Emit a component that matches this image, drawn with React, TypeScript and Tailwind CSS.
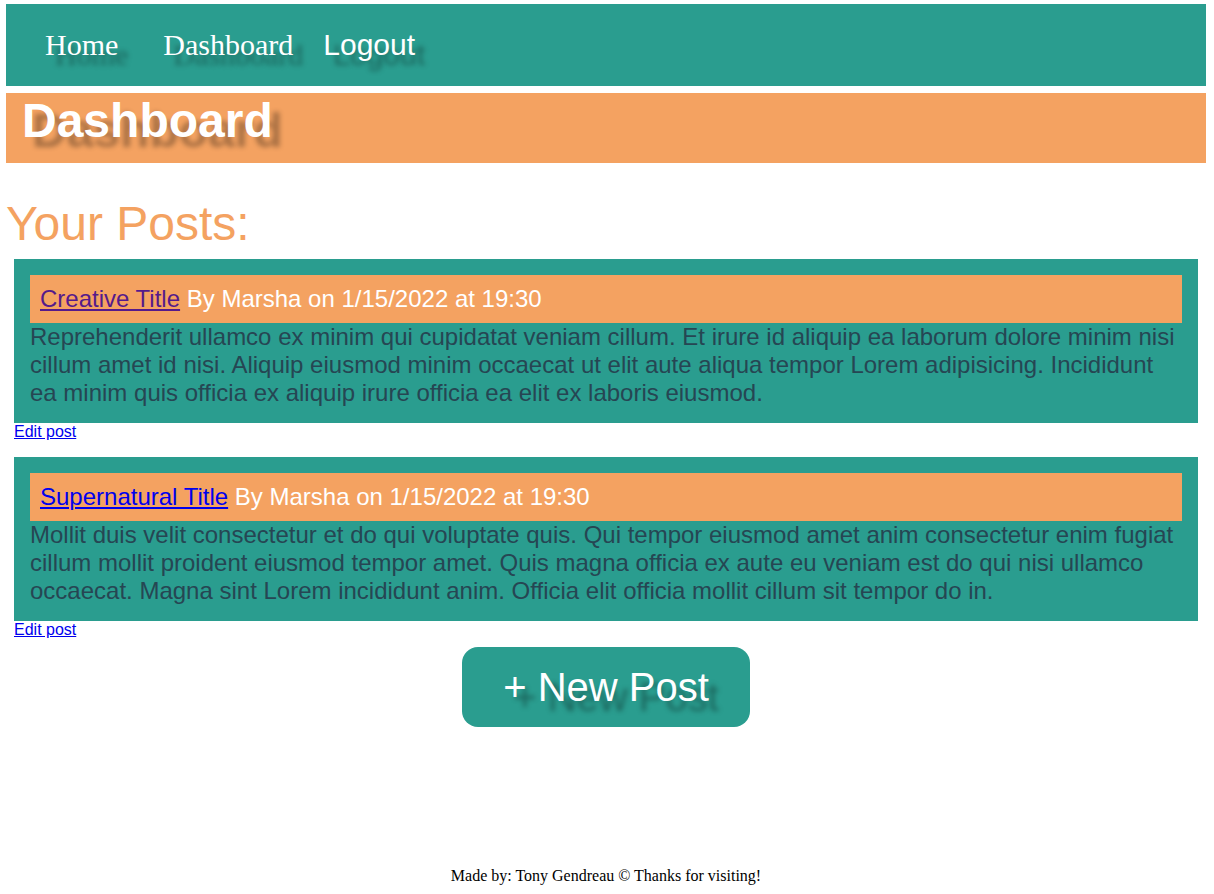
const posts = [
  {
    title: "Creative Title",
    visited: true,
    body: "Reprehenderit ullamco ex minim qui cupidatat veniam cillum. Et irure id aliquip ea laborum dolore minim nisi cillum amet id nisi. Aliquip eiusmod minim occaecat ut elit aute aliqua tempor Lorem adipisicing. Incididunt ea minim quis officia ex aliquip irure officia ea elit ex laboris eiusmod.",
  },
  {
    title: "Supernatural Title",
    visited: false,
    body: "Mollit duis velit consectetur et do qui voluptate quis. Qui tempor eiusmod amet anim consectetur enim fugiat cillum mollit proident eiusmod tempor amet. Quis magna officia ex aute eu veniam est do qui nisi ullamco occaecat. Magna sint Lorem incididunt anim. Officia elit officia mollit cillum sit tempor do in.",
  },
];

// Code: dashboard page
const App = () => {
  return (
    <div className="min-h-screen flex flex-col pl-[6px] pr-[8px] pt-[4px] bg-white font-['Liberation_Sans',Arial,sans-serif]">
      <nav className="h-[82px] bg-[#2a9d8f] flex items-center pl-[39px] text-[30px] leading-[normal] text-white [text-shadow:10px_10px_5px_rgba(0,0,0,0.35)]">
        <a href="#" className="mr-[45px] font-['Liberation_Serif','Times_New_Roman',serif]">Home</a>
        <a href="#" className="mr-[30px] font-['Liberation_Serif','Times_New_Roman',serif]">Dashboard</a>
        <a href="#" className="font-['Liberation_Sans',Arial,sans-serif]">Logout</a>
      </nav>

      <header className="mt-[7px] h-[70px] bg-[#f4a261] pl-[16px]">
        <h1 className="text-[48px] font-bold leading-[normal] text-white [text-shadow:10px_10px_5px_rgba(0,0,0,0.3)]">Dashboard</h1>
      </header>

      <h2 className="mt-[33px] text-[48px] leading-[normal] text-[#f4a261]">Your Posts:</h2>

      <section className="mx-[8px] mt-[8px] flex flex-col">
        {posts.map((post, i) => (
          <div key={post.title} className={i === 0 ? "mb-[16px]" : "mb-[8px]"}>
            <article className="bg-[#2a9d8f] p-[16px]">
              <div className="h-[48px] bg-[#f4a261] flex items-center pl-[10px] text-[24px] leading-[normal] text-white">
                <a href="#" className={post.visited ? "underline text-[#551a8b]" : "underline text-[#0000ee]"}>
                  {post.title}
                </a>
                <span className="whitespace-pre"> By Marsha on 1/15/2022 at 19:30</span>
              </div>
              <p className="text-[24px] leading-[28px] text-[#264653]">{post.body}</p>
            </article>
            <a href="#" className="block w-fit text-[16px] leading-[18px] underline text-[#0000ee]">Edit post</a>
          </div>
        ))}
      </section>

      <div className="flex justify-center">
        <button className="h-[80px] px-[41px] rounded-[16px] bg-[#2a9d8f] text-white text-[40px] leading-[normal] [text-shadow:10px_10px_5px_rgba(0,0,0,0.35)]">
          + New Post
        </button>
      </div>

      <footer className="mt-auto pb-[9px] text-center text-[16px] leading-[normal] text-black font-['Liberation_Serif','Times_New_Roman',serif]">
        Made by: Tony Gendreau © Thanks for visiting!
      </footer>
    </div>
  );
};

export default App;
